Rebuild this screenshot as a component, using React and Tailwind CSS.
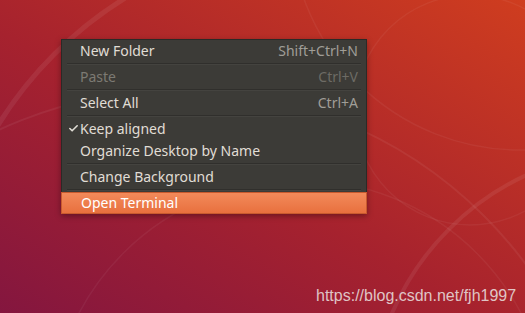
import { Check } from "lucide-react";

const items = [
  { label: "New Folder", shortcut: "Shift+Ctrl+N" },
  { sep: true },
  { label: "Paste", shortcut: "Ctrl+V", disabled: true },
  { sep: true },
  { label: "Select All", shortcut: "Ctrl+A" },
  { sep: true },
  { label: "Keep aligned", checked: true },
  { label: "Organize Desktop by Name" },
  { sep: true },
  { label: "Change Background" },
  { sep: true },
  { label: "Open Terminal", active: true },
];

const Wallpaper = () => (
  <svg className="absolute inset-0" width="525" height="313" viewBox="0 0 525 313">
    <defs>
      <linearGradient id="bg" x1="0" y1="1" x2="1" y2="0">
        <stop offset="0" stopColor="#84163f" />
        <stop offset="0.45" stopColor="#a6222e" />
        <stop offset="1" stopColor="#cf3d1f" />
      </linearGradient>
    </defs>
    <rect width="525" height="313" fill="url(#bg)" />
    <g fill="none" stroke="#ffffff">
      <circle cx="330" cy="330" r="390" strokeOpacity="0.07" strokeWidth="5" />
      <circle cx="180" cy="520" r="430" strokeOpacity="0.06" strokeWidth="2" />
      <circle cx="470" cy="110" r="115" strokeOpacity="0.05" strokeWidth="1.5" />
      <circle cx="640" cy="420" r="270" strokeOpacity="0.07" strokeWidth="4" />
      <circle cx="520" cy="-80" r="230" strokeOpacity="0.05" strokeWidth="1.5" />
      <circle cx="300" cy="430" r="250" strokeOpacity="0.05" strokeWidth="1.5" />
    </g>
  </svg>
);

export default function App() {
  return (
    <div
      className="relative w-[525px] h-[313px] overflow-hidden"
      style={{ fontFamily: '"Noto Sans", "DejaVu Sans", sans-serif' }}
    >
      <Wallpaper />

      <div className="absolute left-[61px] top-[39px] w-[306px] bg-[#3c3b37] border border-[#2b2a27] shadow-[0_2px_6px_rgba(0,0,0,0.35)] text-[14px]">
        {items.map((it, i) =>
          it.sep ? (
            <div key={i} className="h-[4px] px-[5px] pt-[1px]">
              <div className="h-[1px] bg-[#302f2c]" />
              <div className="h-[1px] bg-[#44433f]" />
            </div>
          ) : (
            <div
              key={i}
              className={
                it.active
                  ? "relative flex items-center h-[22px] -mx-[1px] -mb-[1px] pl-[19px] pr-[9px] text-white bg-gradient-to-b from-[#f28a5a] to-[#e8703e] border border-[#c85a2e]"
                  : "relative flex items-center h-[22px] pl-[18px] pr-[8px] " +
                    (it.disabled ? "text-[#7c7a73]" : "text-[#e0ddd5]")
              }
            >
              {it.checked && (
                <Check className="absolute left-[6px] top-[5px] w-[11px] h-[11px] text-[#e0ddd5]" strokeWidth={3.5} />
              )}
              <span className="flex-1 leading-none">{it.label}</span>
              {it.shortcut && (
                <span className={"leading-none " + (it.disabled ? "text-[#6d6b65]" : "text-[#a09e97]")}>
                  {it.shortcut}
                </span>
              )}
            </div>
          )
        )}
      </div>

      <div
        className="absolute left-[316px] top-[284px] text-[16px] text-[#e6d6d6] opacity-90"
        style={{ fontFamily: '"Liberation Sans", Arial, sans-serif' }}
      >
        https://blog.csdn.net/fjh1997
      </div>
    </div>
  );
}
